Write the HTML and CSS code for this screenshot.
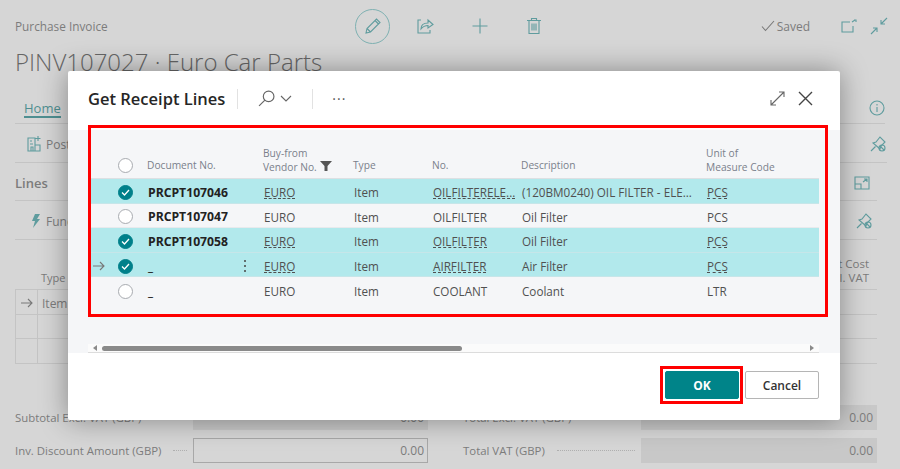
FILE: index.html
```html
<!DOCTYPE html>
<html lang="en">
<head>
  <meta charset="UTF-8">
  <meta name="viewport" content="width=device-width, initial-scale=1.0">
  <title>Get Receipt Lines</title>
  <link rel="stylesheet" href="styles.css">
</head>
<body>
  <div class="page">
    <div class="topbar">
      <span class="page-type">Purchase Invoice</span>
      <div class="top-actions">
        <span class="edit-circle">
          <svg class="ico" width="20" height="20" viewBox="0 0 20 20"><path d="M3 17l1-4.500L13.500 3l3.500 3.500L7.500 16z M4 12.500L7.500 16 M12 4.500L15.500 8"/></svg>
        </span>
        <svg class="ico" width="18" height="18" viewBox="0 0 18 18"><path d="M5 3H2v13h12v-3 M5 12c0-4 3-6 7-6V3l5 4.500L12 11V8.500c-3 0-5 1-7 3.500z"/></svg>
        <svg class="ico" width="18" height="18" viewBox="0 0 18 18"><path d="M9 1.500v15 M1.500 9h15"/></svg>
        <svg class="ico" width="16" height="18" viewBox="0 0 16 18"><path d="M1 3.500h14 M5.500 3.500V1.500h5v2 M3 3.500V16.500h10V3.500 M6 6.500v7 M8 6.500v7 M10 6.500v7"/></svg>
      </div>
      <div class="top-right">
        <span class="saved">
          <svg class="ico-grey" width="14" height="12" viewBox="0 0 14 12"><path d="M1 6.500L4.500 10.500 13 1"/></svg>
          Saved
        </span>
        <svg class="ico" width="16" height="14" viewBox="0 0 16 14"><path d="M9 3H1v10h11V7 M11 3l3-2 M13 1h2v2"/></svg>
        <svg class="ico" width="18" height="18" viewBox="0 0 18 18"><path d="M17 1l-6 6 M11 3v4h4 M1 17l6-6 M3 11h4v4"/></svg>
      </div>
    </div>
    <h1 class="page-title">PINV107027 · Euro Car Parts</h1>

    <div class="tabs">
      <span class="tab-home">Home</span>
      <svg class="ico" width="16" height="16" viewBox="0 0 16 16"><circle cx="8" cy="8" r="7"/><path d="M8 7v5 M8 4v1.500"/></svg>
    </div>

    <div class="action-row">
      <span class="action">
        <svg class="ico" width="14" height="16" viewBox="0 0 14 16"><path d="M1 2h7v13H1z M3 5h2 M3 8h3 M4 15v-4h2v4 M8 9h5v6H8 M11 0v5 M8.500 2.500h5"/></svg>
        Post
      </span>
      <svg class="ico" width="18" height="18" viewBox="0 0 18 18"><path d="M2 16l4.500-4.500 M4 8l3-1 4-5 5 5-4 4-1 3z"/><circle cx="13" cy="13" r="3"/><path d="M11 11l4 4"/></svg>
    </div>

    <div class="lines-row">
      <strong class="lines-title">Lines</strong>
      <svg class="ico lines-icon" width="16" height="14" viewBox="0 0 16 14"><path d="M1 1h14v12H1z M1 8h6v5 M9 6l4-3 M10 3h3v3"/></svg>
    </div>

    <div class="functions-row">
      <span class="action">
        <svg width="10" height="14" viewBox="0 0 10 14"><path class="bolt" d="M4 0h5L6 5h3L2 14l2-7H1z"/></svg>
        Functions
      </span>
      <svg class="ico lines-icon" width="18" height="18" viewBox="0 0 18 18"><path d="M2 16l4.500-4.500 M4 8l3-1 4-5 5 5-4 4-1 3z"/><circle cx="13" cy="13" r="3"/><path d="M11 11l4 4"/></svg>
    </div>

    <div class="col-row">
      <span class="col-type">Type</span>
      <span class="col-cost">Direct Unit Cost<br>Excl. VAT</span>
    </div>
    <div class="bg-table">
      <div class="bg-row">
        <span class="bg-mark"><svg class="ico-grey" width="12" height="10" viewBox="0 0 12 10"><path d="M0 5h11 M7 1l4 4-4 4"/></svg></span>
        <span class="bg-cell">Item</span>
      </div>
      <div class="bg-row"><span class="bg-mark"></span><span class="bg-cell"></span></div>
      <div class="bg-row"><span class="bg-mark"></span><span class="bg-cell"></span></div>
    </div>

    <div class="totals">
      <div class="total">
        <span class="total-label">Subtotal Excl. VAT (GBP)</span>
        <span class="total-value">0.00</span>
      </div>
      <div class="total">
        <span class="total-label">Total Excl. VAT (GBP)</span>
        <span class="total-value">0.00</span>
      </div>
      <div class="total">
        <span class="total-label">Inv. Discount Amount (GBP)<i class="leader"></i></span>
        <span class="total-value editable">0.00</span>
      </div>
      <div class="total">
        <span class="total-label">Total VAT (GBP)<i class="leader"></i></span>
        <span class="total-value">0.00</span>
      </div>
    </div>
  </div>

  <div class="modal">
    <div class="modal-head">
      <h2 class="modal-title">Get Receipt Lines</h2>
      <span class="head-sep"></span>
      <svg class="ico-dark" width="17" height="17" viewBox="0 0 16 16"><circle cx="10" cy="6" r="5"/><path d="M6.500 9.500L1 15"/></svg>
      <svg class="ico-dark chevron" width="12" height="7" viewBox="0 0 12 7"><path d="M1 1l5 5 5-5"/></svg>
      <span class="head-sep second"></span>
      <span class="dots">···</span>
      <span class="head-right">
        <svg class="ico-dark" width="15" height="15" viewBox="0 0 15 15"><path d="M1 14L14 1 M9 1h5v5 M1 9v5h5"/></svg>
        <svg class="ico-close" width="15" height="15" viewBox="0 0 15 15"><path d="M1 1l13 13 M14 1L1 14"/></svg>
      </span>
    </div>

    <div class="modal-body">
      <div class="grid-head">
        <span></span>
        <span class="circle"></span>
        <span class="single">Document No.</span>
        <span>Buy-from<br>Vendor No. <svg width="12" height="10" viewBox="0 0 12 10"><path class="funnel" d="M0 0h12L7.500 5v5h-3V5z"/></svg></span>
        <span class="single">Type</span>
        <span class="single">No.</span>
        <span class="single">Description</span>
        <span>Unit of<br>Measure Code</span>
      </div>

      <div class="grid-row selected">
        <span></span>
        <span class="circle on"><svg width="9" height="7" viewBox="0 0 9 7"><path d="M1 3.500L3.500 6 8 1"/></svg></span>
        <b>PRCPT107046</b>
        <u>EURO</u>
        <span>Item</span>
        <u>OILFILTERELE...</u>
        <span>(120BM0240) OIL FILTER - ELE...</span>
        <u>PCS</u>
      </div>
      <div class="grid-row">
        <span></span>
        <span class="circle"></span>
        <b>PRCPT107047</b>
        <span>EURO</span>
        <span>Item</span>
        <span>OILFILTER</span>
        <span>Oil Filter</span>
        <span>PCS</span>
      </div>
      <div class="grid-row selected">
        <span></span>
        <span class="circle on"><svg width="9" height="7" viewBox="0 0 9 7"><path d="M1 3.500L3.500 6 8 1"/></svg></span>
        <b>PRCPT107058</b>
        <u>EURO</u>
        <span>Item</span>
        <u>OILFILTER</u>
        <span>Oil Filter</span>
        <u>PCS</u>
      </div>
      <div class="grid-row selected">
        <span class="arrow"><svg class="ico-grey" width="12" height="10" viewBox="0 0 12 10"><path d="M0 5h11 M7 1l4 4-4 4"/></svg></span>
        <span class="circle on"><svg width="9" height="7" viewBox="0 0 9 7"><path d="M1 3.500L3.500 6 8 1"/></svg></span>
        <span class="doc-cell"><b>_</b><i class="kebab"></i></span>
        <u>EURO</u>
        <span>Item</span>
        <u>AIRFILTER</u>
        <span>Air Filter</span>
        <u>PCS</u>
      </div>
      <div class="grid-row last">
        <span></span>
        <span class="circle"></span>
        <b>_</b>
        <span>EURO</span>
        <span>Item</span>
        <span>COOLANT</span>
        <span>Coolant</span>
        <span>LTR</span>
      </div>

      <div class="scrollbar">
        <i class="arrow-left"></i>
        <i class="thumb"></i>
        <i class="arrow-right"></i>
      </div>
    </div>

    <div class="modal-foot">
      <button class="btn primary">OK</button>
      <button class="btn">Cancel</button>
    </div>
  </div>

  <div class="red-box table-box"></div>
  <div class="red-box ok-box"></div>
</body>
</html>
```

FILE: styles.css
```css
body {
  margin: 0;
  height: 469px;
  overflow: hidden;
  background: #d6d6d6;
  font-family: "Open Sans", "Noto Sans", sans-serif;
  font-size: 12px;
  color: #7c7c7c;
}
svg {
  display: block;
  flex: none;
}
.ico, .ico-grey, .ico-dark, .ico-close {
  fill: none;
  stroke-width: 1.1;
}
.ico path, .ico circle { stroke: #5f9c9e; fill: none; }
.ico-grey path { stroke: #787878; fill: none; }
.ico-dark path, .ico-dark circle { stroke: #666; fill: none; }
.ico-close path { stroke: #444; fill: none; stroke-width: 1.4; }

/* background page */
.page {
  padding: 0 15px;
  display: flex;
  flex-direction: column;
}
.topbar {
  height: 52px;
  display: flex;
  align-items: center;
}
.page-type {
  width: 340px;
  font-size: 11.800px;
}
.top-actions {
  display: flex;
  align-items: center;
  gap: 37px;
}
.edit-circle {
  width: 33px;
  height: 33px;
  margin-right: -11px;
  border: 1px solid #7fb1b2;
  border-radius: 50%;
  display: flex;
  align-items: center;
  justify-content: center;
}
.top-right {
  margin-left: auto;
  display: flex;
  align-items: center;
  gap: 13px;
  margin-right: -3px;
}
.saved {
  display: flex;
  align-items: center;
  gap: 2px;
  margin-right: 18px;
  font-size: 12px;
}
.page-title {
  margin: 0;
  height: 28px;
  line-height: 20px;
  font-size: 24px;
  font-weight: 300;
  color: #666;
}
.tabs {
  height: 44px;
  box-sizing: border-box;
  border-bottom: 1px solid #c4c4c4;
  display: flex;
  justify-content: space-between;
  align-items: flex-start;
  padding: 20px 0 0 9px;
}
.tab-home {
  color: #4f8f91;
  font-size: 13px;
  line-height: 16px;
  border-bottom: 2px solid #4f8f91;
}
.action-row, .lines-row, .functions-row {
  box-sizing: border-box;
  border-bottom: 1px solid #c4c4c4;
  display: flex;
  justify-content: space-between;
  align-items: center;
  padding-top: 2px;
}
.action-row { height: 39px; padding-left: 12px; margin-right: -2px; }
.lines-row { height: 38px; margin-right: 8px; }
.functions-row { height: 39px; padding-left: 16px; margin-right: 8px; }
.lines-icon { margin-right: 7px; }
.functions-row .lines-icon { margin-right: 4px; }
.action {
  display: flex;
  align-items: center;
  gap: 5px;
}
.bolt { fill: #5f9c9e; }
.lines-title {
  font-size: 13px;
  font-weight: 600;
}
.col-row {
  height: 50px;
  margin-right: 8px;
  display: flex;
  justify-content: space-between;
  align-items: flex-end;
  padding: 0 0 4px 26px;
  box-sizing: border-box;
  border-bottom: 1px solid #c4c4c4;
  font-size: 11px;
  line-height: 14px;
}
.col-cost {
  text-align: right;
  margin-right: 8px;
  font-size: 11.500px;
}
.bg-table {
  margin-right: 8px;
  border-left: 1px solid #c4c4c4;
}
.bg-row {
  height: 24.500px;
  box-sizing: border-box;
  border-bottom: 1px solid #c4c4c4;
  display: flex;
}
.bg-mark {
  width: 21px;
  border-right: 1px solid #c4c4c4;
  display: flex;
  align-items: center;
  justify-content: center;
  padding-top: 2px;
  box-sizing: content-box;
}
.bg-cell {
  padding-left: 4px;
  line-height: 27px;
}
.totals {
  margin-top: 41px;
  margin-right: 8px;
  display: grid;
  grid-template-columns: 413px 414px;
  column-gap: 35px;
  row-gap: 8px;
}
.total {
  display: flex;
  align-items: center;
  font-size: 11.400px;
}
.total-label {
  width: 178px;
  flex: none;
  white-space: nowrap;
  display: flex;
  align-items: center;
}
.leader {
  flex: 1;
  margin: 0 6px 0 12px;
  border-bottom: 1px dotted #b0b0b0;
}
.total-value {
  flex: 1;
  height: 25px;
  line-height: 25px;
  box-sizing: border-box;
  padding-right: 4px;
  text-align: right;
  font-size: 12px;
  background: #c8c8c8;
}
.total-value.editable {
  background: none;
  border: 1px solid #a8a8a8;
  line-height: 23px;
  padding-right: 3px;
}

/* dialog */
.modal {
  position: absolute;
  left: 68px;
  top: 71px;
  width: 772px;
  height: 349px;
  background: #fff;
  box-shadow: 0 0 28px rgba(0, 0, 0, 0.38);
  border-radius: 2px;
  display: flex;
  flex-direction: column;
  color: #505050;
}
.modal-head {
  height: 59px;
  flex: none;
  display: flex;
  align-items: center;
  padding: 0 27px 4px 20px;
  box-sizing: border-box;
}
.modal-title {
  margin: 0;
  font-size: 16.500px;
  font-weight: 600;
  color: #262626;
}
.head-sep {
  width: 1px;
  height: 20px;
  background: #e2e2e2;
  margin: 0 20px 0 12px;
}
.head-sep.second { margin: 0 19px 0 20px; }
.chevron { margin-left: 5px; }
.dots {
  font-size: 14px;
  letter-spacing: 1px;
  color: #555;
}
.head-right {
  margin-left: auto;
  display: flex;
  align-items: center;
  gap: 13px;
}
.modal-body {
  height: 223px;
  flex: none;
  background: #f5f6f8;
  padding-left: 20px;
  padding-right: 21px;
  display: flex;
  flex-direction: column;
}
.grid-head, .grid-row {
  display: grid;
  grid-template-columns: 28px 31px 116px 90px 79px 89px 185px 113px;
  align-items: center;
  white-space: nowrap;
}
.grid-head {
  height: 49px;
  box-sizing: border-box;
  padding-bottom: 4px;
  align-items: end;
  border-bottom: 1px solid #dde0e3;
  font-size: 10.200px;
  line-height: 14px;
  color: #7a808b;
}
.grid-head .circle { margin-bottom: 1px; }
.grid-head .single { margin-bottom: 2px; }
.grid-head svg { display: inline-block; margin-left: 1px; }
.funnel { fill: #555; }
.grid-row {
  height: 24.600px;
  box-sizing: border-box;
  padding-top: 3px;
  border-bottom: 1px solid #e8eaed;
  font-size: 11.700px;
}
.grid-row.last { border-bottom: none; }
.grid-row > * { padding-left: 1px; }
.grid-row.selected {
  background: #b2e9ec;
  border-bottom-color: #c6e6e9;
}
.grid-row u {
  text-decoration: underline dashed 1px;
  text-underline-offset: 1px;
}
.grid-row b {
  font-size: 12.200px;
  font-weight: 700;
  color: #222;
}
.arrow { padding-left: 5px; }
.doc-cell {
  display: flex;
  justify-content: space-between;
  align-items: center;
  padding-right: 17px;
}
.kebab {
  width: 2px;
  height: 2px;
  background: #444;
  box-shadow: 0 -5px 0 #444, 0 5px 0 #444;
  border-radius: 50%;
}
.circle {
  width: 15px;
  height: 15px;
  margin-left: 2px;
  padding: 0;
  box-sizing: border-box;
  border: 1px solid #a8abb0;
  border-radius: 50%;
  background: #fff;
  display: flex;
  align-items: center;
  justify-content: center;
}
.grid-row .circle { padding: 0; }
.circle.on {
  background: #00808a;
  border-color: #00808a;
}
.circle.on path {
  fill: none;
  stroke: #fff;
  stroke-width: 1.300;
}
.scrollbar {
  margin-top: auto;
  height: 8px;
  background: #fbfbfb;
  border-bottom: 1px solid #dcdcdc;
  display: flex;
  align-items: center;
  padding: 0 5px;
}
.thumb {
  width: 360px;
  height: 5px;
  margin-left: 5px;
  border-radius: 3px;
  background: #8a8a8a;
}
.arrow-left {
  border-style: solid;
  border-width: 3px 4px 3px 0;
  border-color: transparent #8a8a8a transparent transparent;
}
.arrow-right {
  margin-left: auto;
  border-style: solid;
  border-width: 3px 0 3px 4px;
  border-color: transparent transparent transparent #8a8a8a;
}
.modal-foot {
  flex: 1;
  display: flex;
  justify-content: flex-end;
  align-items: flex-start;
  gap: 6px;
  padding: 18px 21px 0 0;
}
.btn {
  width: 74px;
  height: 28px;
  padding: 0;
  box-sizing: border-box;
  border: 1px solid #b5b5b5;
  border-radius: 2px;
  background: #fff;
  font-family: inherit;
  font-size: 12px;
  font-weight: 600;
  color: #333;
}
.btn.primary {
  background: #008489;
  border-color: #008489;
  color: #fff;
  font-weight: 700;
}

/* annotation boxes from the screenshot */
.red-box {
  position: absolute;
  box-sizing: border-box;
  border: 3px solid #f00;
}
.table-box {
  left: 88px;
  top: 125px;
  width: 740px;
  height: 192px;
}
.ok-box {
  left: 660px;
  top: 366px;
  width: 83px;
  height: 38px;
}
```
